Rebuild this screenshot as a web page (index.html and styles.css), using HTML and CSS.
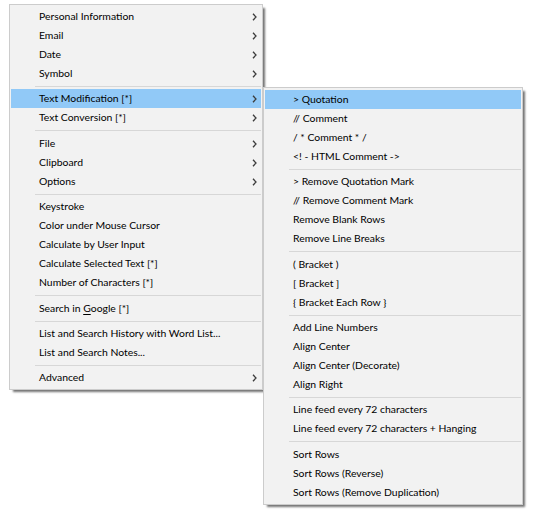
FILE: index.html
```html
<!DOCTYPE html>
<html>
<head>
<meta charset="utf-8">
<link rel="stylesheet" href="styles.css">
</head>
<body>
<div class="desktop">
  <div class="menu main">
    <div class="item"><span class="label">Personal Information</span><svg class="arrow" viewBox="0 0 5 8"><path d="M1 0.8 L4 4 L1 7.2"/></svg></div>
    <div class="item"><span class="label">Email</span><svg class="arrow" viewBox="0 0 5 8"><path d="M1 0.8 L4 4 L1 7.2"/></svg></div>
    <div class="item"><span class="label">Date</span><svg class="arrow" viewBox="0 0 5 8"><path d="M1 0.8 L4 4 L1 7.2"/></svg></div>
    <div class="item"><span class="label">Symbol</span><svg class="arrow" viewBox="0 0 5 8"><path d="M1 0.8 L4 4 L1 7.2"/></svg></div>
    <div class="sep"></div>
    <div class="item active"><span class="label">Text Modification [*]</span><svg class="arrow" viewBox="0 0 5 8"><path d="M1 0.8 L4 4 L1 7.2"/></svg></div>
    <div class="item"><span class="label">Text Conversion [*]</span><svg class="arrow" viewBox="0 0 5 8"><path d="M1 0.8 L4 4 L1 7.2"/></svg></div>
    <div class="sep tall"></div>
    <div class="item"><span class="label">File</span><svg class="arrow" viewBox="0 0 5 8"><path d="M1 0.8 L4 4 L1 7.2"/></svg></div>
    <div class="item"><span class="label">Clipboard</span><svg class="arrow" viewBox="0 0 5 8"><path d="M1 0.8 L4 4 L1 7.2"/></svg></div>
    <div class="item"><span class="label">Options</span><svg class="arrow" viewBox="0 0 5 8"><path d="M1 0.8 L4 4 L1 7.2"/></svg></div>
    <div class="sep"></div>
    <div class="item"><span class="label">Keystroke</span></div>
    <div class="item"><span class="label">Color under Mouse Cursor</span></div>
    <div class="item"><span class="label">Calculate by User Input</span></div>
    <div class="item"><span class="label">Calculate Selected Text [*]</span></div>
    <div class="item"><span class="label">Number of Characters [*]</span></div>
    <div class="sep tall"></div>
    <div class="item"><span class="label">Search in <u>G</u>oogle [*]</span></div>
    <div class="sep"></div>
    <div class="item"><span class="label">List and Search History with Word List...</span></div>
    <div class="item"><span class="label">List and Search Notes...</span></div>
    <div class="sep"></div>
    <div class="item"><span class="label">Advanced</span><svg class="arrow" viewBox="0 0 5 8"><path d="M1 0.8 L4 4 L1 7.2"/></svg></div>
  </div>

  <div class="menu submenu">
    <div class="item active"><span class="label">&gt; Quotation</span></div>
    <div class="item"><span class="label">// Comment</span></div>
    <div class="item"><span class="label">/ * Comment * /</span></div>
    <div class="item"><span class="label">&lt;! - HTML Comment -&gt;</span></div>
    <div class="sep"></div>
    <div class="item"><span class="label">&gt; Remove Quotation Mark</span></div>
    <div class="item"><span class="label">// Remove Comment Mark</span></div>
    <div class="item"><span class="label">Remove Blank Rows</span></div>
    <div class="item"><span class="label">Remove Line Breaks</span></div>
    <div class="sep tall"></div>
    <div class="item"><span class="label">( Bracket )</span></div>
    <div class="item"><span class="label">[ Bracket ]</span></div>
    <div class="item"><span class="label">{ Bracket Each Row }</span></div>
    <div class="sep"></div>
    <div class="item"><span class="label">Add Line Numbers</span></div>
    <div class="item"><span class="label">Align Center</span></div>
    <div class="item"><span class="label">Align Center (Decorate)</span></div>
    <div class="item"><span class="label">Align Right</span></div>
    <div class="sep"></div>
    <div class="item"><span class="label">Line feed every 72 characters</span></div>
    <div class="item"><span class="label">Line feed every 72 characters + Hanging</span></div>
    <div class="sep tall"></div>
    <div class="item"><span class="label">Sort Rows</span></div>
    <div class="item"><span class="label">Sort Rows (Reverse)</span></div>
    <div class="item"><span class="label">Sort Rows (Remove Duplication)</span></div>
  </div>
</div>
</body>
</html>
```

FILE: styles.css
```css
html, body {
  margin: 0;
  padding: 0;
  background: #ffffff;
}

.desktop {
  position: relative;
  width: 539px;
  height: 518px;
  font-family: "Lato", "Open Sans", sans-serif;
  font-size: 10.4px;
  color: #000000;
}

.menu {
  position: absolute;
  box-sizing: border-box;
  background: #f2f2f2;
  border: 1px solid #cccccc;
  padding: 2px 1px;
  display: flex;
  flex-direction: column;
  box-shadow: 3px 3px 2px -1px rgba(0, 0, 0, 0.55);
}

.main {
  left: 9px;
  top: 4px;
  width: 254px;
}

.submenu {
  left: 263px;
  top: 87px;
  width: 260px;
}

.item {
  height: 19px;
  display: flex;
  align-items: center;
  padding: 0 4px 0 28px;
  white-space: nowrap;
}

.item.active {
  background: #91c9f7;
}

.label {
  flex: 1;
  line-height: 13px;
  margin-bottom: 0;
}

.label u {
  text-decoration-thickness: 1px;
  text-underline-offset: 2px;
}

.arrow {
  width: 5px;
  height: 8px;
  fill: none;
  stroke: #3c3c3c;
  stroke-width: 1.3;
}

.sep {
  height: 1px;
  background: #d7d7d7;
  margin: 3px 0 2px 24px;
}

.sep.tall {
  margin: 3px 0 3px 24px;
}
```
